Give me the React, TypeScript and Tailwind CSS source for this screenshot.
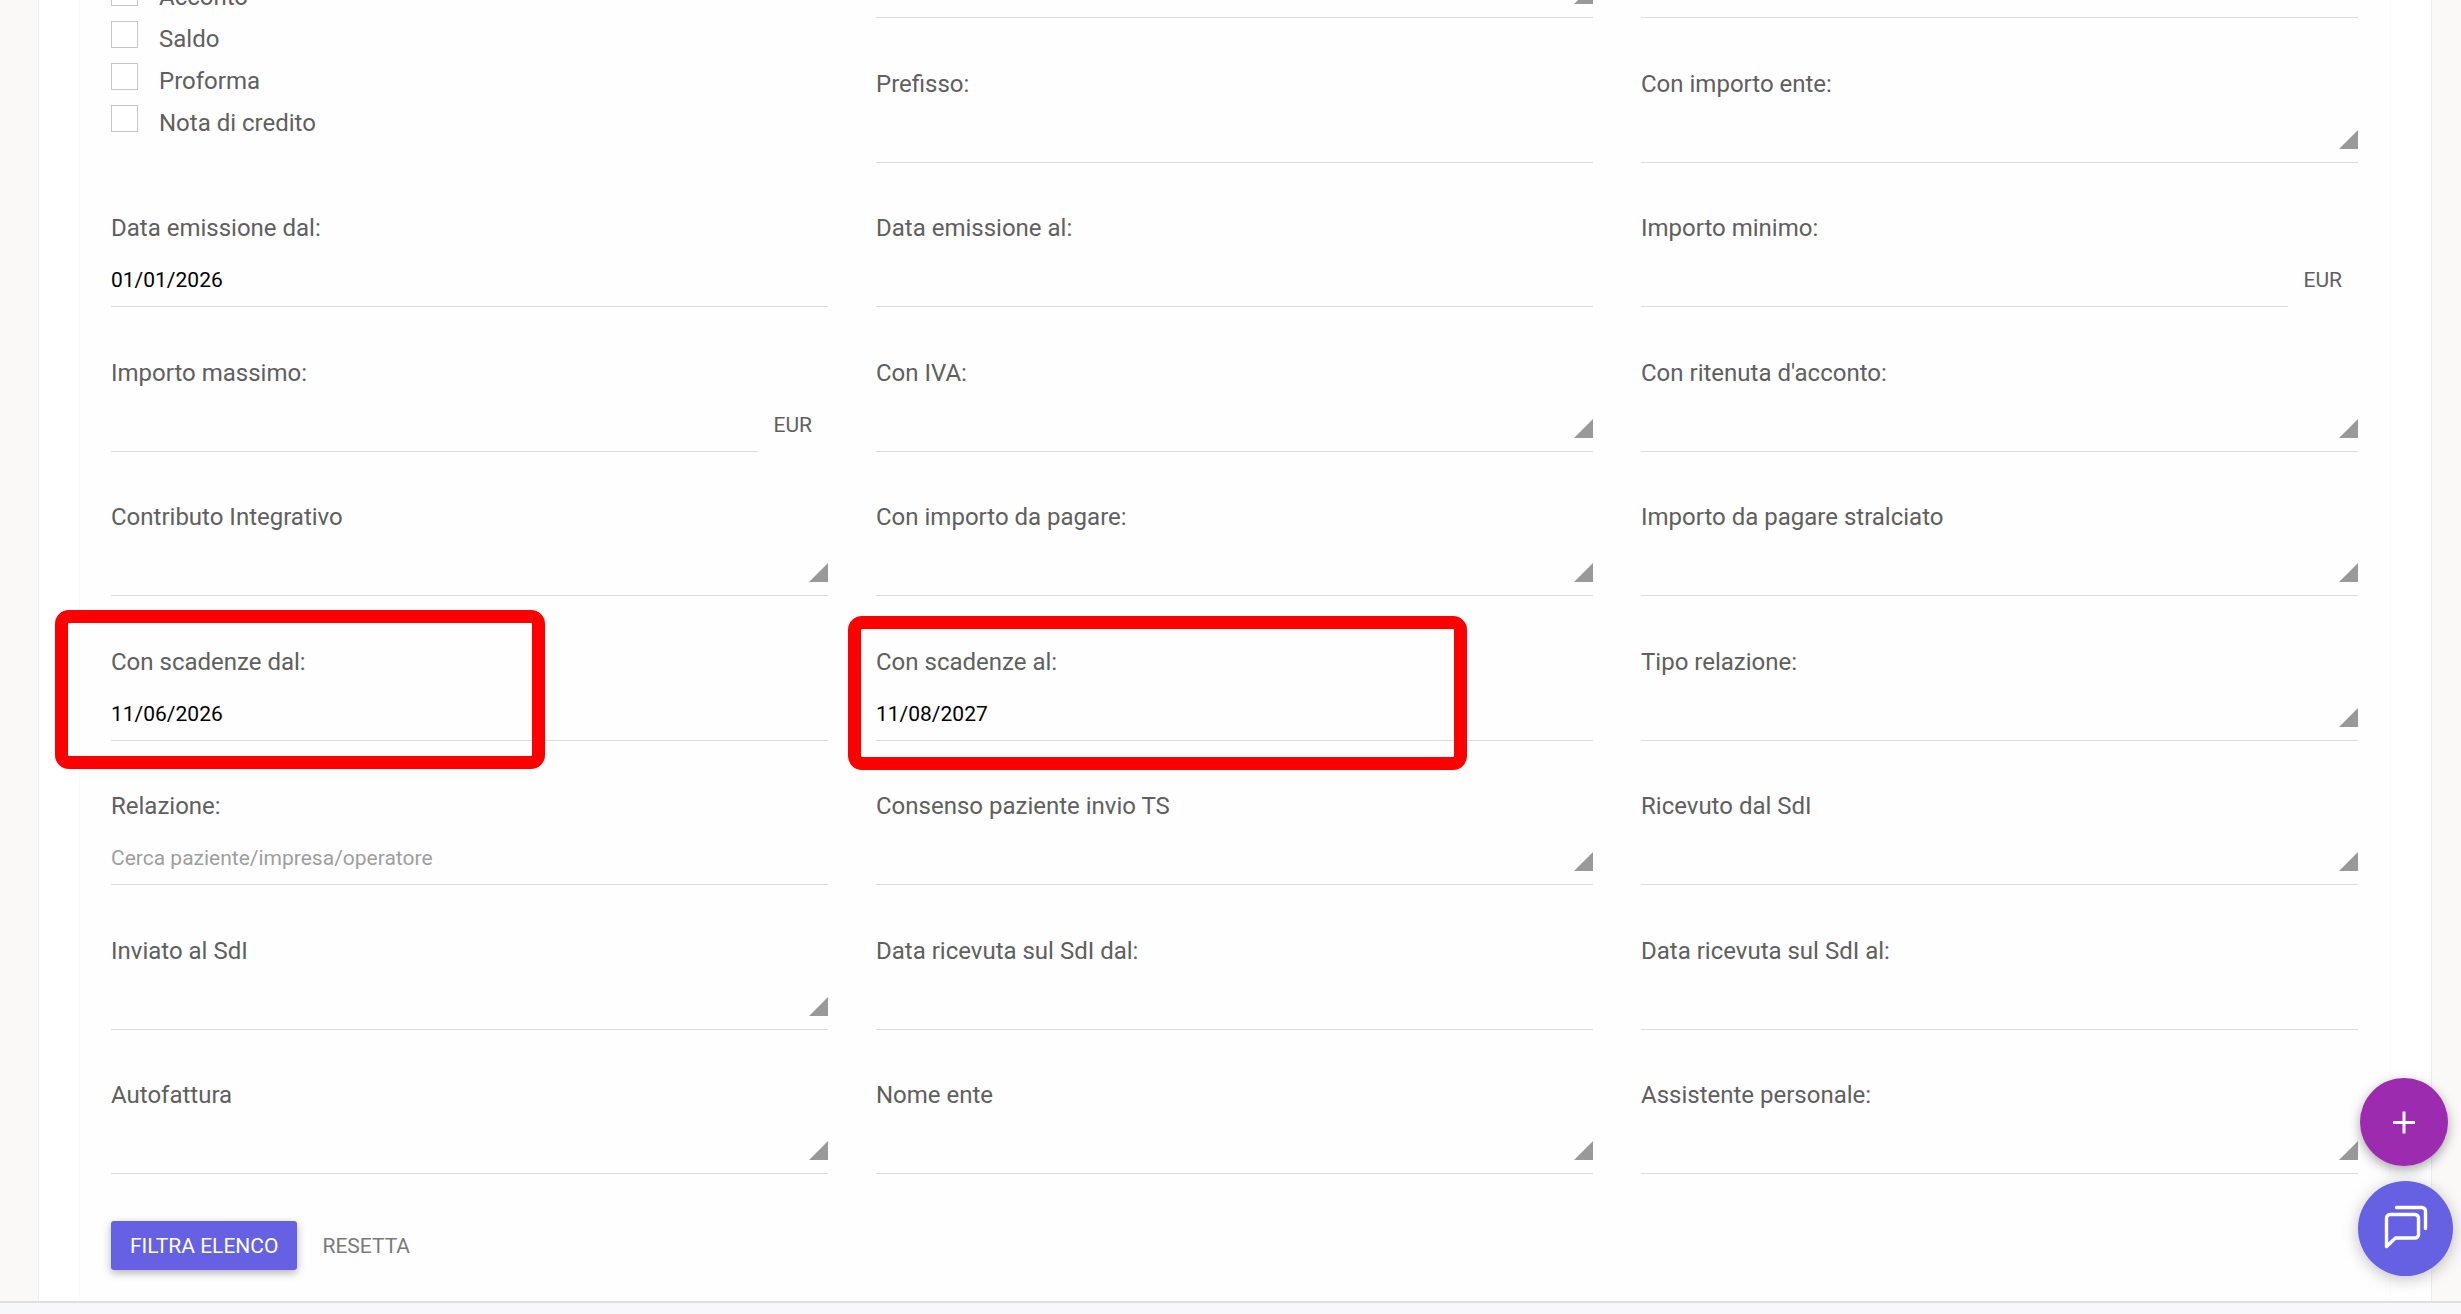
import { useState } from 'react'

type FieldKind = 'text' | 'select' | 'amount'

interface FieldDef {
  id: string
  label?: string
  name?: string
  kind: FieldKind
  value?: string
  placeholder?: string
  mark?: 'from' | 'to'
}

const DOCUMENT_TYPES = ['Acconto', 'Saldo', 'Proforma', 'Nota di credito']

const FIELDS: FieldDef[] = [
  { id: 'sezionale', name: 'Sezionale', kind: 'select' },
  { id: 'numero', name: 'Numero', kind: 'text' },
  { id: 'prefisso', label: 'Prefisso:', kind: 'text' },
  { id: 'importo-ente', label: 'Con importo ente:', kind: 'select' },
  { id: 'emissione-dal', label: 'Data emissione dal:', kind: 'text', value: '01/01/2026' },
  { id: 'emissione-al', label: 'Data emissione al:', kind: 'text' },
  { id: 'importo-min', label: 'Importo minimo:', kind: 'amount' },
  { id: 'importo-max', label: 'Importo massimo:', kind: 'amount' },
  { id: 'iva', label: 'Con IVA:', kind: 'select' },
  { id: 'ritenuta', label: "Con ritenuta d'acconto:", kind: 'select' },
  { id: 'contributo', label: 'Contributo Integrativo', kind: 'select' },
  { id: 'da-pagare', label: 'Con importo da pagare:', kind: 'select' },
  { id: 'stralciato', label: 'Importo da pagare stralciato', kind: 'select' },
  { id: 'scadenze-dal', label: 'Con scadenze dal:', kind: 'text', value: '11/06/2026', mark: 'from' },
  { id: 'scadenze-al', label: 'Con scadenze al:', kind: 'text', value: '11/08/2027', mark: 'to' },
  { id: 'tipo-relazione', label: 'Tipo relazione:', kind: 'select' },
  { id: 'relazione', label: 'Relazione:', kind: 'text', placeholder: 'Cerca paziente/impresa/operatore' },
  { id: 'consenso', label: 'Consenso paziente invio TS', kind: 'select' },
  { id: 'ricevuto-sdi', label: 'Ricevuto dal SdI', kind: 'select' },
  { id: 'inviato-sdi', label: 'Inviato al SdI', kind: 'select' },
  { id: 'ricevuta-dal', label: 'Data ricevuta sul SdI dal:', kind: 'text' },
  { id: 'ricevuta-al', label: 'Data ricevuta sul SdI al:', kind: 'text' },
  { id: 'autofattura', label: 'Autofattura', kind: 'select' },
  { id: 'nome-ente', label: 'Nome ente', kind: 'select' },
  { id: 'assistente', label: 'Assistente personale:', kind: 'select' },
]

const MARKS = {
  from: 'left-[-56px] -bottom-7 w-[490px] h-[159px]',
  to: '-left-7 bottom-[-29px] w-[619px] h-[154px]',
}

const CONTROL =
  'block h-[54px] w-full min-w-0 appearance-none rounded-none border-b border-[#dcdcdc] bg-transparent pt-px text-[21px] text-black outline-none placeholder:text-[#9e9e9e] placeholder:opacity-100'

function Field({ field }: { field: FieldDef }) {
  const [value, setValue] = useState(field.value ?? '')

  return (
    <div className="relative flex flex-col justify-end gap-2.5">
      {field.label && (
        <label htmlFor={field.id} className="text-2xl leading-[30px]">{field.label}</label>
      )}
      {field.kind === 'select' ? (
        <div className="relative">
          <select id={field.id} aria-label={field.name} className={CONTROL}>
            <option value="" />
          </select>
          <svg className="pointer-events-none absolute right-0 bottom-3.5 h-[19px] w-[19px]" viewBox="0 0 19 19">
            <path d="M19 0V19H0Z" fill="#999" />
          </svg>
        </div>
      ) : (
        <div className="flex items-center">
          <input
            id={field.id}
            type="text"
            aria-label={field.name}
            value={value}
            placeholder={field.placeholder}
            onChange={e => setValue(e.target.value)}
            className={CONTROL}
          />
          {field.kind === 'amount' && <span className="px-4 text-[21px] leading-[30px]">EUR</span>}
        </div>
      )}
      {field.mark && (
        <div className={`pointer-events-none absolute rounded-[14px] border-[13px] border-[#fe0000] ${MARKS[field.mark]}`} />
      )}
    </div>
  )
}

export default function App() {
  return (
    <div
      className="min-h-screen overflow-hidden bg-[#f8f8fb] text-[#5f5f5f]"
      style={{ fontFamily: 'Roboto, "Liberation Sans", sans-serif' }}
    >
      <div className="border-b-2 border-[#dfdfe0] bg-[#faf9f7] pr-[29px] pl-[38px]">
        <main className="border-x border-[#ececec] bg-white px-10">
          <form
            className="border-x border-[#fafafa] bg-[#fefefe] pr-8 pb-[31px] pl-[31px]"
            onSubmit={e => e.preventDefault()}
          >
            <div className="-mt-[126px] grid min-h-[1300px] grid-cols-3 grid-rows-9 gap-x-12">
              <fieldset className="row-span-2 flex flex-col justify-end pb-[19px]">
                {DOCUMENT_TYPES.map(type => (
                  <label key={type} className="flex h-[42px] items-start gap-[21px] text-2xl leading-[42px]">
                    <input
                      type="checkbox"
                      className="mt-[3px] h-[27px] w-[27px] appearance-none border border-[#c6c6c6] bg-white checked:bg-[#6660e3]"
                    />
                    {type}
                  </label>
                ))}
              </fieldset>
              {FIELDS.map(field => (
                <Field key={field.id} field={field} />
              ))}
            </div>

            <div className="mt-[47px] flex gap-1.5">
              <button
                type="submit"
                className="h-[49px] rounded-[3px] bg-[#6660e3] px-[19px] pt-0.5 text-[21px] text-white shadow-[0_3px_9px_rgba(0,0,0,0.3)]"
              >
                FILTRA ELENCO
              </button>
              <button type="reset" className="h-[49px] px-[19px] pt-0.5 text-[21px] text-[#7a7a7a]">
                RESETTA
              </button>
            </div>
          </form>
        </main>
      </div>

      {/* floating actions */}
      <button
        aria-label="Aggiungi"
        className="fixed right-[13px] bottom-[148px] h-[88px] w-[88px] rounded-full bg-[#9c2bb0] shadow-[0_4px_12px_rgba(0,0,0,0.35)]"
      >
        <svg viewBox="0 0 88 88" fill="none" stroke="white" strokeWidth={3}>
          <path d="M33 44.5H55M44 33.5V55.5" />
        </svg>
      </button>
      <button
        aria-label="Chat"
        className="fixed right-2 bottom-[38px] h-[95px] w-[95px] rounded-full bg-[#6660e3] shadow-[0_3px_16px_rgba(0,0,0,0.25)]"
      >
        <svg viewBox="0 0 95 95" fill="none" stroke="white" strokeWidth={3.4} strokeLinecap="round" strokeLinejoin="round">
          <path d="M28.5 65.5V37a3.5 3.5 0 0 1 3.5-3.5H57a3.5 3.5 0 0 1 3.5 3.5V53.5a3.5 3.5 0 0 1-3.5 3.5H37.5L28.5 65.5Z" />
          <path d="M38.5 26.5H64a3.5 3.5 0 0 1 3.5 3.5V47.5" />
        </svg>
      </button>
    </div>
  )
}
